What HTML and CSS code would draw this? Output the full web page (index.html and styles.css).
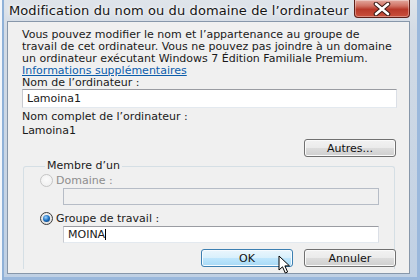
FILE: index.html
```html
<!DOCTYPE html>
<html lang="fr">
<head>
<meta charset="utf-8">
<title>Modification du nom</title>
<link rel="stylesheet" href="styles.css">
</head>
<body>
<div class="window">
  <div class="titlebar">
    <span class="title">Modification du nom ou du domaine de l’ordinateur</span>
    <button class="close" aria-label="Fermer">
      <svg width="20" height="14" viewBox="0 0 20 14">
        <path d="M4 2 L16 12 M16 2 L4 12" stroke="#3a1a16" stroke-width="4.6" stroke-linecap="round"/>
        <path d="M4 2 L16 12 M16 2 L4 12" stroke="#ffffff" stroke-width="2.6" stroke-linecap="round"/>
      </svg>
    </button>
  </div>
  <div class="panel">
    <p class="intro">Vous pouvez modifier le nom et l’appartenance au groupe de<br>travail de cet ordinateur. Vous ne pouvez pas joindre à un domaine<br>un ordinateur exécutant Windows 7 Édition Familiale Premium.<br><a class="link" href="#">Informations supplémentaires</a></p>
    <div class="label first">Nom de l’ordinateur :</div>
    <div class="input">Lamoina1</div>
    <div class="label">Nom complet de l’ordinateur :</div>
    <div class="value">Lamoina1</div>
    <div class="row-right"><button class="btn">Autres...</button></div>
    <fieldset class="group">
      <legend>Membre d’un</legend>
      <div class="radio disabled"><span class="dot"></span><span>Domaine :</span></div>
      <div class="input sub disabled"></div>
      <div class="radio checked"><span class="dot"></span><span>Groupe de travail :</span></div>
      <div class="input sub">MOINA<span class="caret"></span></div>
    </fieldset>
    <div class="actions">
      <button class="btn ok">OK</button>
      <button class="btn">Annuler</button>
    </div>
  </div>
  <svg class="cursor" width="14" height="20" viewBox="0 0 14 20">
    <path d="M1 1 L1 15 L4.5 11.8 L7.3 18 L9.6 17 L6.9 10.9 L11.5 10.9 Z" fill="#ffffff" stroke="#000000" stroke-width="1" stroke-linejoin="round"/>
  </svg>
</div>
</body>
</html>
```
FILE: styles.css
```css
* { box-sizing: border-box; }
html, body { margin: 0; padding: 0; }
body {
  width: 420px;
  height: 280px;
  overflow: hidden;
  font-family: "DejaVu Sans", "Liberation Sans", sans-serif;
  color: #1a1a1a;
}
.window {
  position: relative;
  width: 420px;
  height: 280px;
  display: flex;
  flex-direction: column;
  background: linear-gradient(to bottom, #dfe4ea 0, #d3dbe5 30px, #bfd0e4 100%);
  box-shadow: inset 2px 0 0 #f4f7fb, inset 4px 0 0 #8fb1d8, inset -3px 0 0 #9ab8dc, inset 0 -3px 0 #9ab8dc;
}
.titlebar {
  height: 21px;
  display: flex;
  align-items: flex-start;
  padding-left: 9px;
}
.title {
  font-size: 13px;
  letter-spacing: 0.1px;
  line-height: 22px;
  color: #151515;
  text-shadow: 0 0 6px #ffffff, 0 0 3px #ffffff;
  white-space: nowrap;
}
.close {
  margin-left: auto;
  margin-right: 10px;
  width: 56px;
  height: 18px;
  flex-shrink: 0;
  padding: 0;
  border: 1px solid #5e1f18;
  border-top: none;
  border-radius: 0 0 4px 4px;
  background: linear-gradient(to bottom, #e3a99f 0, #d07163 35%, #b8392a 55%, #c9503c 100%);
  box-shadow: inset 0 0 0 1px rgba(255,255,255,0.35);
  display: flex;
  align-items: center;
  justify-content: center;
}
.panel {
  flex: 1;
  margin: 0 10px 6px 7px;
  background: #f0f0f0;
  border: 1px solid #8797aa;
  padding: 7px 12px 0 14px;
  font-size: 11px;
  line-height: 12px;
}
.intro {
  margin: 0;
  white-space: nowrap;
}
.link {
  color: #0b5dab;
  text-decoration: underline;
}
.label.first { margin-top: 0; }
.label { margin-top: 3px; height: 12px; }
.input {
  margin-top: 0;
  height: 19px;
  background: #ffffff;
  border: 1px solid #abadb3;
  border-top-color: #9a9ca2;
  border-left-color: #c8cad0;
  border-right-color: #dbdfe6;
  border-bottom-color: #e3e9ef;
  padding: 3px 0 0 4px;
  line-height: 12px;
}
.value { margin-top: 2px; height: 12px; }
.row-right {
  display: flex;
  justify-content: flex-end;
  margin-top: 2px;
  padding-right: 1px;
}
.btn {
  width: 92px;
  height: 18px;
  padding: 0;
  font-family: inherit;
  font-size: 11px;
  color: #111;
  border: 1px solid #707070;
  border-radius: 3px;
  background: linear-gradient(to bottom, #f2f2f2 0, #ebebeb 48%, #dcdcdc 52%, #cfcfcf 100%);
  box-shadow: inset 0 0 0 1px #fafafa;
}
.group {
  margin: 3px 2px 0 1px;
  padding: 0 17px 26px 17px;
  border: 1px solid #d5dfe5;
  border-bottom: none;
  border-radius: 3px 3px 0 0;
  min-width: 0;
}
.group legend {
  padding: 0 2px;
  margin-left: 4px;
  line-height: 12px;
}
.radio {
  display: flex;
  align-items: center;
  gap: 3px;
  height: 13px;
  margin-top: 2px;
  margin-left: -1px;
}
.radio + .input { margin-top: 1px; }
.input + .radio { margin-top: 7px; }
.dot {
  width: 13px;
  height: 13px;
  border-radius: 50%;
  border: 1px solid #3c3c3c;
  background: radial-gradient(circle at 50% 40%, #ffffff 0, #e4e4e4 60%, #cfcfcf 100%);
  position: relative;
}
.radio.disabled { color: #8d8d8d; }
.radio.disabled .dot {
  border-color: #c5c5c5;
  background: radial-gradient(circle at 50% 40%, #fbfbfb 0, #ededed 100%);
}
.radio.checked .dot::after {
  content: "";
  position: absolute;
  left: 2px;
  top: 2px;
  width: 7px;
  height: 7px;
  border-radius: 50%;
  background: radial-gradient(circle at 40% 35%, #9fd4ff 0, #1a6fc0 50%, #0b2d5c 100%);
}
.input.sub {
  margin-left: 22px;
  width: 316px;
  height: 17px;
  padding-top: 2px;
}
.input.disabled {
  background: #f0f0f0;
  border-color: #b6bcc6;
}
.caret {
  display: inline-block;
  width: 1px;
  height: 11px;
  background: #000;
  vertical-align: -2px;
}
.actions {
  display: flex;
  justify-content: flex-end;
  gap: 11px;
  margin-top: -20px;
  padding-right: 1px;
}
.btn.ok {
  border-color: #3c7fb1;
  background: linear-gradient(to bottom, #eaf6fd 0, #d9f0fc 48%, #bee6fd 52%, #a7d9f5 100%);
  box-shadow: inset 0 0 0 1px #f6fbff;
}
.cursor {
  position: absolute;
  left: 278px;
  top: 255px;
}
```
